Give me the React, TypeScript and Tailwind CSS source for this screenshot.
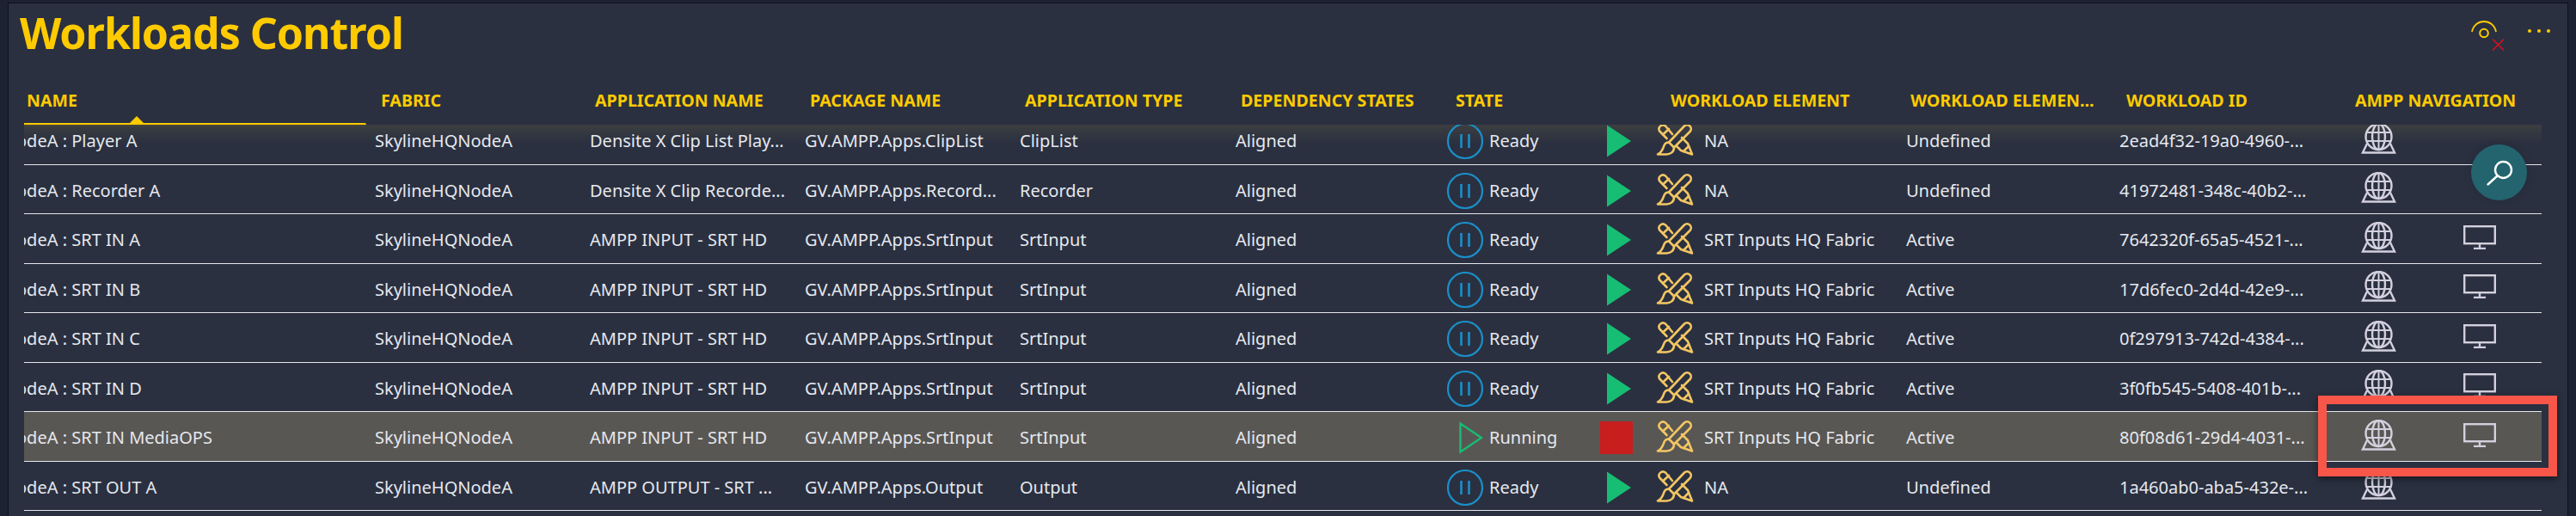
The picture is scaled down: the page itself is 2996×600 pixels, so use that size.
import React from 'react';

const GRID = 'grid grid-cols-[402px_250px_250px_250px_250px_250px_245px_285px_250px_270px_226px]';

interface Row {
  name: string;
  app: string;
  pkg: string;
  type: string;
  element: string;
  elementState: string;
  id: string;
  monitor?: boolean;
  running?: boolean;
}

const rows: Row[] = [
  { name: 'Player A', app: 'Densite X Clip List Play...', pkg: 'GV.AMPP.Apps.ClipList', type: 'ClipList', element: 'NA', elementState: 'Undefined', id: '2ead4f32-19a0-4960-...' },
  { name: 'Recorder A', app: 'Densite X Clip Recorde...', pkg: 'GV.AMPP.Apps.Record...', type: 'Recorder', element: 'NA', elementState: 'Undefined', id: '41972481-348c-40b2-...' },
  { name: 'SRT IN A', app: 'AMPP INPUT - SRT HD', pkg: 'GV.AMPP.Apps.SrtInput', type: 'SrtInput', element: 'SRT Inputs HQ Fabric', elementState: 'Active', id: '7642320f-65a5-4521-...', monitor: true },
  { name: 'SRT IN B', app: 'AMPP INPUT - SRT HD', pkg: 'GV.AMPP.Apps.SrtInput', type: 'SrtInput', element: 'SRT Inputs HQ Fabric', elementState: 'Active', id: '17d6fec0-2d4d-42e9-...', monitor: true },
  { name: 'SRT IN C', app: 'AMPP INPUT - SRT HD', pkg: 'GV.AMPP.Apps.SrtInput', type: 'SrtInput', element: 'SRT Inputs HQ Fabric', elementState: 'Active', id: '0f297913-742d-4384-...', monitor: true },
  { name: 'SRT IN D', app: 'AMPP INPUT - SRT HD', pkg: 'GV.AMPP.Apps.SrtInput', type: 'SrtInput', element: 'SRT Inputs HQ Fabric', elementState: 'Active', id: '3f0fb545-5408-401b-...', monitor: true },
  { name: 'SRT IN MediaOPS', app: 'AMPP INPUT - SRT HD', pkg: 'GV.AMPP.Apps.SrtInput', type: 'SrtInput', element: 'SRT Inputs HQ Fabric', elementState: 'Active', id: '80f08d61-29d4-4031-...', monitor: true, running: true },
  { name: 'SRT OUT A', app: 'AMPP OUTPUT - SRT ...', pkg: 'GV.AMPP.Apps.Output', type: 'Output', element: 'NA', elementState: 'Undefined', id: '1a460ab0-aba5-432e-...' },
];

function ToolsIcon() {
  return (
    <svg width="42" height="38" viewBox="0 0 42 38" fill="none" stroke="#f3c663" strokeWidth="2.6" strokeLinejoin="round" strokeLinecap="round" className="shrink-0 overflow-visible -translate-y-[2px]">
      <path d="M32 3.500a4.600 4.600 0 0 1 6.500 6.500L20 28.500 14 22.500z" />
      <path d="M14 22.500c-2 0-4.500 1-5.500 3.500C7.500 29 6 34 1 36.500h10c5 0 9-3 9-8" />
      <path d="M18 13 10 3.500a4.600 4.600 0 0 0-6.800 6L11.500 18" />
      <path d="M7 13.500 14 7" />
      <path d="M29 17l7 7 5 12.500-13-4.500-5-5" />
      <path d="M31 33l6-6" />
    </svg>
  );
}

function GlobeIcon() {
  return (
    <svg width="41" height="36" viewBox="0 0 41 36" fill="none" stroke="#d3d0de" strokeWidth="2.400" className="shrink-0">
      <circle cx="20.500" cy="16" r="15" />
      <ellipse cx="20.500" cy="16" rx="7.500" ry="15" />
      <path d="M20.500 1v30M6 11h29M6 21h29" strokeWidth="2" />
      <path d="M7 24 2 34.500h37L34 24" />
    </svg>
  );
}

function MonitorIcon() {
  return (
    <svg width="38" height="28" viewBox="0 0 38 28" fill="none" stroke="#d3d0de" strokeWidth="2.400" className="shrink-0">
      <rect x="1.200" y="1.200" width="35.600" height="20" />
      <path d="M19 22v5M12 27h14" />
    </svg>
  );
}

function PauseIcon() {
  return (
    <svg width="42" height="42" viewBox="0 0 42 42" fill="none" stroke="#1a8fc8" className="shrink-0">
      <circle cx="21" cy="21" r="20" strokeWidth="2.200" />
      <path d="M16.500 13v16M25.500 13v16" strokeWidth="2.600" />
    </svg>
  );
}

function StateCell({ running }: { running?: boolean }) {
  return (
    <div className="flex items-center pl-[3px] gap-[7px]">
      {running ? (
        <div className="w-[42px] flex justify-end">
          <svg width="28" height="38" viewBox="0 0 28 38" fill="none" stroke="#17bd73" strokeWidth="2.400" className="shrink-0">
            <path d="M1.500 2.500v33L26 19z" />
          </svg>
        </div>
      ) : (
        <PauseIcon />
      )}
      <span className="w-[130px]">{running ? 'Running' : 'Ready'}</span>
      {running ? (
        <div className="w-[38px] h-[38px] bg-[#c81e1e] shrink-0 -ml-[8px]" />
      ) : (
        <svg width="28" height="38" viewBox="0 0 28 38" fill="#17bd73" className="shrink-0">
          <path d="M0 0.500v37L28 19z" />
        </svg>
      )}
    </div>
  );
}

function TableRow({ row }: { row: Row }) {
  return (
    <div className={`${GRID} h-[57.5px] pt-[4px] items-center border-b border-[#e6e7ea] ${row.running ? 'bg-[#595753]' : ''}`}>
      {/* table is scrolled sideways, so the name is cut at the left */}
      <div className="overflow-hidden whitespace-nowrap">
        <span className="block -ml-[9px]">odeA : {row.name}</span>
      </div>
      <div className="pl-[6px]">SkylineHQNodeA</div>
      <div className="pl-[6px] whitespace-nowrap">{row.app}</div>
      <div className="pl-[6px] whitespace-nowrap">{row.pkg}</div>
      <div className="pl-[6px]">{row.type}</div>
      <div className="pl-[7px]">Aligned</div>
      <StateCell running={row.running} />
      <div className="flex items-center gap-[13px] pl-[2px] whitespace-nowrap">
        <ToolsIcon />
        <span>{row.element}</span>
      </div>
      <div className="pl-[7px]">{row.elementState}</div>
      <div className="pl-[5px] whitespace-nowrap">{row.id}</div>
      <div className="flex items-center gap-[78px] pl-[16px] mb-[7px]">
        <GlobeIcon />
        {row.monitor && <MonitorIcon />}
      </div>
    </div>
  );
}

function HeaderRow() {
  const cols: [string, string][] = [
    ['NAME', 'pl-[3px]'],
    ['FABRIC', 'pl-[13px]'],
    ['APPLICATION NAME', 'pl-[12px]'],
    ['PACKAGE NAME', 'pl-[12px]'],
    ['APPLICATION TYPE', 'pl-[12px]'],
    ['DEPENDENCY STATES', 'pl-[13px]'],
    ['STATE', 'pl-[13px]'],
    ['WORKLOAD ELEMENT', 'pl-[18px]'],
    ['WORKLOAD ELEMEN...', 'pl-[12px]'],
    ['WORKLOAD ID', 'pl-[13px]'],
    ['AMPP NAVIGATION', 'pl-[9px]'],
  ];
  return (
    <div className={`${GRID} h-[50px] pb-[6px] items-center relative text-[#ffcb00] font-bold text-[19.6px] whitespace-nowrap`}>
      {cols.map(([label, cls]) => (
        <div key={label} className={cls}>{label}</div>
      ))}
      {/* sort marker on the active column */}
      <div className="absolute left-0 bottom-[-2px] w-[398px] h-[4px] bg-[#ffcb00] rounded-r-sm" />
      <div className="absolute left-[123px] bottom-[2px] w-0 h-0 border-x-[8px] border-x-transparent border-b-[8px] border-b-[#ffcb00]" />
    </div>
  );
}

export default function App() {
  return (
    <div className="relative h-[600px] w-[2996px] overflow-hidden bg-[#1c2231] pl-[9px] pr-[9px] pt-[3px] font-['Noto_Sans',sans-serif] text-[20px] text-[#e6e8ee]">
      <div className="h-[597px] w-[2978px] bg-[#2a3040] border-l border-t border-r border-[#0e1119]">
        <div className="h-[91px] flex justify-between pl-[13px] pr-[20px]">
          <h1 className="text-[50px] leading-[68px] font-bold text-[#ffcb00] tracking-[-1px]">Workloads Control</h1>
          <div className="flex items-start gap-[28px] pt-[20px]">
            <svg width="38" height="36" viewBox="0 0 38 36" fill="none">
              <path d="M1 13C4 -3 26 -3 29 13" stroke="#ffcb00" strokeWidth="1.800" />
              <circle cx="15" cy="14.500" r="4.800" stroke="#ffcb00" strokeWidth="2" />
              <path d="M25 21.500l13 13M38 21.500l-13 13" stroke="#d4121f" strokeWidth="1.600" />
            </svg>
            <div className="flex gap-[7px] pt-[10px]">
              <div className="w-[4px] h-[4px] rounded-full bg-[#ffcb00]" />
              <div className="w-[4px] h-[4px] rounded-full bg-[#ffcb00]" />
              <div className="w-[4px] h-[4px] rounded-full bg-[#ffcb00]" />
            </div>
          </div>
        </div>
        <div className="ml-[18px] w-[2928px]">
          <HeaderRow />
          <div className="relative h-[455px] overflow-hidden">
            <div className="absolute inset-x-0 top-0 h-[22px] bg-gradient-to-b from-[#3c3e40] to-transparent" />
            <div className="relative -mt-[11px]">
              {rows.map(row => (
                <TableRow key={row.id} row={row} />
              ))}
            </div>
          </div>
        </div>
      </div>

      {/* floating search button */}
      <div className="absolute left-[2874px] top-[168px] w-[65px] h-[65px] rounded-full bg-[#23646f] flex items-center justify-center shadow-[0_0_12px_rgba(0,0,0,0.12)]">
        <svg width="32" height="32" viewBox="0 0 32 32" fill="none" stroke="#ffffff" strokeWidth="2.400" strokeLinecap="round">
          <circle cx="20.500" cy="12.500" r="9.500" />
          <path d="M13.500 19.500 2.500 29.500" />
        </svg>
      </div>

      {/* annotation box */}
      <div className="absolute left-[2696px] top-[460px] w-[278px] h-[94px] border-[10px] border-[#f9564a] shadow-[0_3px_8px_rgba(0,0,0,0.5)]" />
    </div>
  );
}
